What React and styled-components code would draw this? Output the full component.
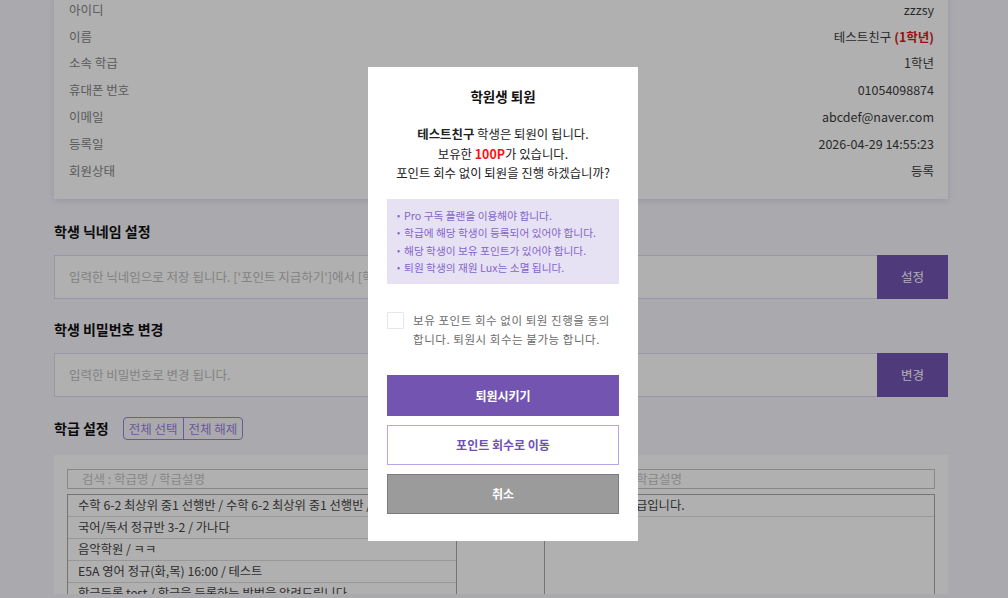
import styled, { createGlobalStyle } from "styled-components";

const GlobalStyle = createGlobalStyle`
  html, body {
    margin: 0;
    padding: 0;
    background: #f6f5fc;
    font-family: "Noto Sans CJK KR", "Noto Sans", sans-serif;
    color: #333;
    overflow: hidden;
  }
  * { box-sizing: border-box; }
`;

const Page = styled.div`
  width: 894px;
  margin-left: 54px;
  height: 598px;
`;

const InfoCard = styled.div`
  margin-top: -4px;
  background: #fff;
  padding: 0 14px 15px;
  box-shadow: 0 2px 6px rgba(60, 50, 120, 0.12);
`;

const InfoRow = styled.div`
  display: flex;
  align-items: center;
  justify-content: space-between;
  height: 26.8px;
  font-size: 12.5px;
`;

const Label = styled.span`
  color: #858585;
  padding-left: 1px;
`;

const Value = styled.span`
  color: #3c3c3c;
`;

const Grade = styled.span`
  color: #d81a1a;
  font-weight: 700;
`;

const SectionTitle = styled.h3`
  margin: ${(p) => p.$top || 22}px 0 14px;
  font-size: 14px;
  line-height: 20px;
  font-weight: 700;
  color: #111;
`;

const InputRow = styled.div`
  display: flex;
  height: 44px;
`;

const TextInput = styled.div`
  flex: 1;
  display: flex;
  align-items: center;
  padding-left: 14px;
  background: #fff;
  border: 1px solid #dedbf2;
  border-right: none;
  font-size: 12.5px;
  color: #bdbdbd;
  white-space: nowrap;
  overflow: hidden;
`;

const SideButton = styled.button`
  width: 71px;
  border: none;
  background: #7354b3;
  color: #fff;
  font-family: inherit;
  font-size: 12.5px;
`;

const SectionHead = styled.div`
  display: flex;
  align-items: center;
  gap: 14px;
  margin-top: 20px;
  height: 23px;

  ${SectionTitle} {
    margin: 0;
  }
`;

const ToggleGroup = styled.div`
  display: flex;
  height: 23px;
  border: 1px solid #9a83dc;
  border-radius: 4px;
  overflow: hidden;
`;

const ToggleButton = styled.button`
  border: none;
  border-left: ${(p) => (p.$divider ? "1px solid #9a83dc" : "none")};
  background: transparent;
  color: #9a83dc;
  font-family: inherit;
  font-size: 12.5px;
  padding: 0 5px;
`;

const ClassPanel = styled.div`
  margin-top: 15px;
  background: #fff;
  padding: 14px 13px 0;
  height: 200px;
`;

const PairGrid = styled.div`
  display: grid;
  grid-template-columns: 390px 87px 391px;
  margin-top: ${(p) => p.$top || 0}px;
`;

const SearchInput = styled.div`
  grid-column: ${(p) => p.$col};
  height: 20px;
  border: 1px solid #c6c6c6;
  padding-left: 14px;
  font-size: 12.5px;
  line-height: 18px;
  color: #c4c4c4;
  white-space: nowrap;
  overflow: hidden;
`;

const ClassList = styled.div`
  height: 160px;
  border: 1px solid #a9a9a9;
  border-bottom: none;
  overflow: hidden;
`;

const ClassItem = styled.div`
  height: 22px;
  line-height: 21px;
  padding-left: 10px;
  border-bottom: 1px solid #dcdcdc;
  font-size: 12.3px;
  color: #444;
  white-space: nowrap;
  overflow: hidden;
`;

const Overlay = styled.div`
  position: fixed;
  inset: 0;
  background: rgba(0, 0, 0, 0.31);
  display: flex;
  justify-content: center;
  align-items: flex-start;
  padding-top: 67px;
  padding-right: 2px;
`;

const Modal = styled.div`
  width: 270px;
  background: #fff;
  padding: 19px 19px 27px;
  text-align: center;
`;

const ModalTitle = styled.h2`
  margin: 0;
  font-size: 13.5px;
  line-height: 20px;
  font-weight: 700;
  color: #111;
`;

const Message = styled.p`
  margin: 19px 0 0;
  font-size: 12.4px;
  line-height: 19.5px;
  color: #222;

  b {
    font-weight: 700;
  }
`;

const Points = styled.b`
  color: #ff1010;
`;

const NoticeBox = styled.ul`
  margin: 15px 0 0;
  padding: 8px 8px 7px 10px;
  list-style: none;
  background: #e7e1f4;
  text-align: left;
`;

const NoticeItem = styled.li`
  display: flex;
  gap: 4px;
  font-size: 10.7px;
  line-height: 17.6px;
  color: #8466c9;
  white-space: nowrap;

  &::before {
    content: "•";
    font-size: 9px;
  }
`;

const AgreeRow = styled.label`
  display: flex;
  gap: 9px;
  margin-top: 27px;
  text-align: left;
`;

const CheckBox = styled.span`
  flex: none;
  width: 17px;
  height: 17px;
  margin-top: 1px;
  border: 1px solid #e6e6ea;
  border-radius: 1px;
  background: #fff;
`;

const AgreeText = styled.span`
  font-size: 11.5px;
  line-height: 19px;
  color: #6b6b6b;
  letter-spacing: 0.55px;
  word-break: keep-all;
`;

const ModalButton = styled.button`
  display: block;
  width: 100%;
  height: ${(p) => p.$height || 40}px;
  margin-top: ${(p) => p.$gap}px;
  font-family: inherit;
  font-size: 12px;
  font-weight: 700;
  border: 1px solid ${(p) => p.$border};
  background: ${(p) => p.$bg};
  color: ${(p) => p.$color};
`;

const infoRows = [
  ["아이디", "zzzsy"],
  ["이름", null],
  ["소속 학급", "1학년"],
  ["휴대폰 번호", "01054098874"],
  ["이메일", "abcdef@naver.com"],
  ["등록일", "2026-04-29 14:55:23"],
  ["회원상태", "등록"],
];

const leftClasses = [
  "수학 6-2 최상위 중1 선행반 / 수학 6-2 최상위 중1 선행반 / 수학 6-2 최상위 중1 선행반",
  "국어/독서 정규반 3-2 / 가나다",
  "음악학원 / ㅋㅋ",
  "E5A 영어 정규(화,목) 16:00 / 테스트",
  "학급등록 test / 학급을 등록하는 방법을 알려드립니다.",
  "초등 수학 기초반 / 기초반",
];

const notices = [
  "Pro 구독 플랜을 이용해야 합니다.",
  "학급에 해당 학생이 등록되어 있어야 합니다.",
  "해당 학생이 보유 포인트가 있어야 합니다.",
  "퇴원 학생의 재원 Lux는 소멸 됩니다.",
];

export default function App() {
  return (
    <>
      <GlobalStyle />
      <Page>
        <InfoCard>
          {infoRows.map(([label, value]) => (
            <InfoRow key={label}>
              <Label>{label}</Label>
              <Value>
                {value ?? (
                  <>
                    테스트친구 <Grade>(1학년)</Grade>
                  </>
                )}
              </Value>
            </InfoRow>
          ))}
        </InfoCard>

        <SectionTitle>학생 닉네임 설정</SectionTitle>
        <InputRow>
          <TextInput>
            입력한 닉네임으로 저장 됩니다. ['포인트 지급하기']에서 [학생 닉네임]으로 표시 됩니다.
          </TextInput>
          <SideButton>설정</SideButton>
        </InputRow>

        <SectionTitle $top={20}>학생 비밀번호 변경</SectionTitle>
        <InputRow>
          <TextInput>입력한 비밀번호로 변경 됩니다.</TextInput>
          <SideButton>변경</SideButton>
        </InputRow>

        <SectionHead>
          <SectionTitle>학급 설정</SectionTitle>
          <ToggleGroup>
            <ToggleButton>전체 선택</ToggleButton>
            <ToggleButton $divider>전체 해제</ToggleButton>
          </ToggleGroup>
        </SectionHead>

        <ClassPanel>
          <PairGrid>
            <SearchInput $col={1}>검색 : 학급명 / 학급설명</SearchInput>
            <SearchInput $col={3}>검색 : 학급명 / 학급설명</SearchInput>
          </PairGrid>
          <PairGrid $top={5}>
            <ClassList>
              {leftClasses.map((name) => (
                <ClassItem key={name}>{name}</ClassItem>
              ))}
            </ClassList>
            <div />
            <ClassList>
              <ClassItem>기초반 / 기본 학급입니다.</ClassItem>
            </ClassList>
          </PairGrid>
        </ClassPanel>
      </Page>

      <Overlay>
        <Modal>
          <ModalTitle>학원생 퇴원</ModalTitle>
          <Message>
            <b>테스트친구</b> 학생은 퇴원이 됩니다.
            <br />
            보유한 <Points>100P</Points>가 있습니다.
            <br />
            포인트 회수 없이 퇴원을 진행 하겠습니까?
          </Message>
          <NoticeBox>
            {notices.map((text) => (
              <NoticeItem key={text}>{text}</NoticeItem>
            ))}
          </NoticeBox>
          <AgreeRow>
            <CheckBox />
            <AgreeText>
              보유 포인트 회수 없이 퇴원 진행을 동의 합니다. 퇴원시 회수는 불가능 합니다.
            </AgreeText>
          </AgreeRow>
          <ModalButton $gap={26} $height={41} $bg="#7355b1" $border="#7355b1" $color="#fff">
            퇴원시키기
          </ModalButton>
          <ModalButton $gap={9} $bg="#fff" $border="#b9a6ea" $color="#6d50b4">
            포인트 회수로 이동
          </ModalButton>
          <ModalButton $gap={9} $bg="#9b9b9b" $border="#7b7b7b" $color="#fff">
            취소
          </ModalButton>
        </Modal>
      </Overlay>
    </>
  );
}
